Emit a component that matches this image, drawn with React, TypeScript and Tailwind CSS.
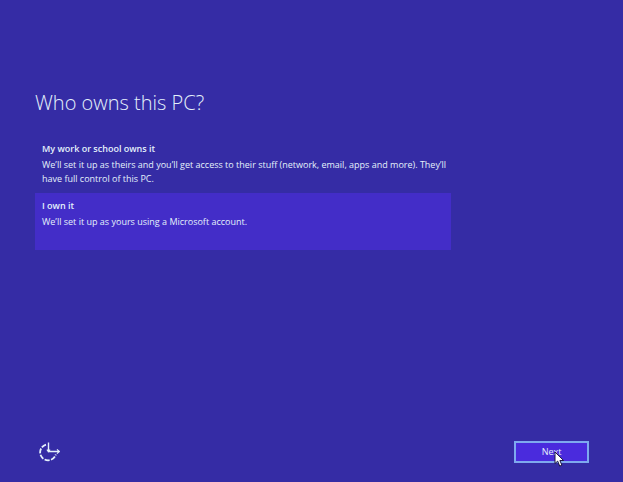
import { useState } from "react";

const options = [
  {
    id: "work",
    title: "My work or school owns it",
    text: "We’ll set it up as theirs and you’ll get access to their stuff (network, email, apps and more). They’ll have full control of this PC.",
  },
  {
    id: "own",
    title: "I own it",
    text: "We’ll set it up as yours using a Microsoft account.",
  },
];

function EaseOfAccessIcon() {
  return (
    <svg width="22" height="20" viewBox="0 0 22 20" fill="none" stroke="#e4f1fb" aria-hidden="true">
      <path d="M7 2.6A8 8 0 1 0 16.8 12.6" strokeWidth="1.8" strokeDasharray="5 1.4" />
      <path d="M9.5 0.5v9h11" strokeWidth="1.4" />
      <path d="M7.9 7.7l1.6 1.8 1.6-1.8M18 7.3l2.2 2.2-2.2 2.2" strokeWidth="1.2" />
    </svg>
  );
}

function Pointer() {
  return (
    <svg className="pointer-events-none absolute top-2 left-[38px]" width="11" height="17" viewBox="0 0 11 17" aria-hidden="true">
      <path d="M1 1v11.5l2.7-2.4 2 5 2.2-.9-2-4.7h3.7z" fill="#fff" stroke="#1b1640" />
    </svg>
  );
}

export default function App() {
  const [owner, setOwner] = useState("own");

  return (
    <main className="flex min-h-screen flex-col bg-[#352ca5] px-[34px] pt-[87px] pb-[19px] font-['Open_Sans','Noto_Sans',sans-serif] text-[#e4f1fb]">
      <h1 id="question" className="px-px text-[20px] leading-8 font-light">
        Who owns this PC?
      </h1>

      <div role="radiogroup" aria-labelledby="question" className="mt-[17px] ml-px w-full max-w-[416px]">
        {options.map((option) => (
          <label
            key={option.id}
            className="relative block min-h-[57px] pt-1.5 pr-1 pb-[7px] pl-[7px] text-[9px] leading-[14px] has-checked:bg-[#432dc8]"
          >
            <input
              type="radio"
              name="owner"
              className="absolute inset-0 appearance-none"
              checked={owner === option.id}
              onChange={() => setOwner(option.id)}
            />
            <span className="block font-semibold">{option.title}</span>
            <span className="mt-0.5 block">{option.text}</span>
          </label>
        ))}
      </div>

      <footer className="mt-auto flex items-center justify-between">
        <button type="button" aria-label="Ease of access" className="ml-[5px]">
          <EaseOfAccessIcon />
        </button>
        <button
          type="button"
          className="relative h-[22px] w-[75px] border-2 border-[#7ea9ef] bg-[#4a2bdd] text-[9px] leading-4"
        >
          Next
          <Pointer />
        </button>
      </footer>
    </main>
  );
}
